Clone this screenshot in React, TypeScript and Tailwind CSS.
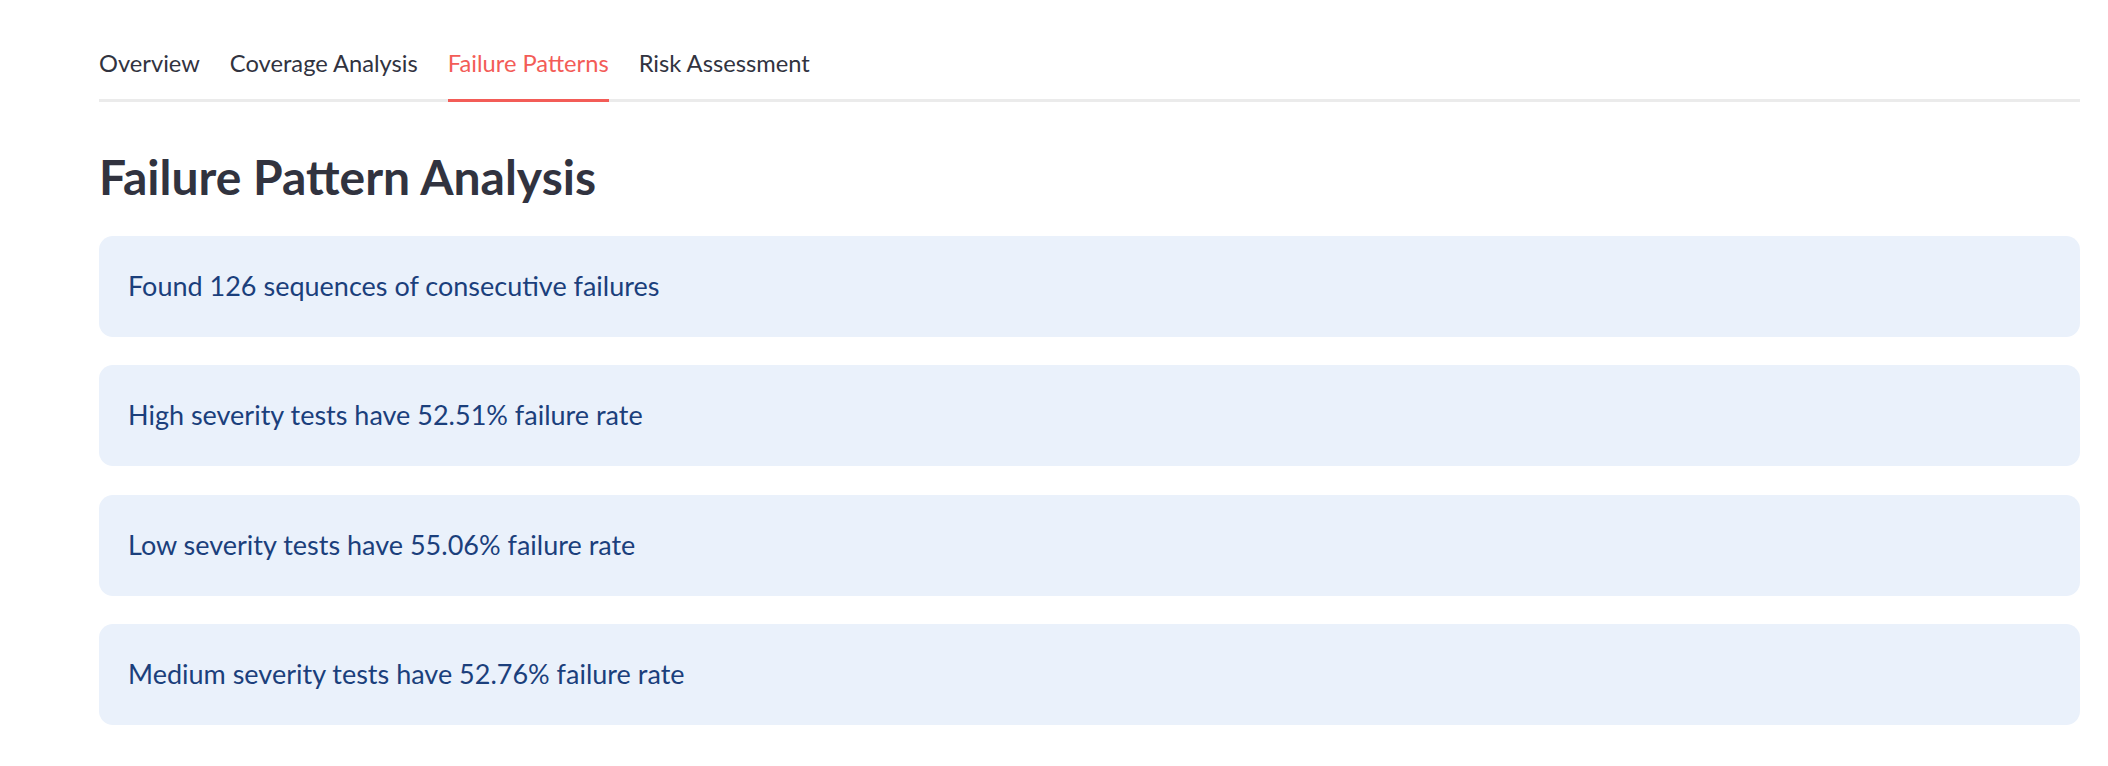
import React from "react";

const tabs = ["Overview", "Coverage Analysis", "Failure Patterns", "Risk Assessment"];
const active = "Failure Patterns";

const messages = [
  "Found 126 sequences of consecutive failures",
  "High severity tests have 52.51% failure rate",
  "Low severity tests have 55.06% failure rate",
  "Medium severity tests have 52.76% failure rate",
];

export default function App() {
  return (
    <div
      className="min-h-screen w-full bg-white pl-[99px] pr-[28px] pt-[30px]"
      style={{ fontFamily: "Lato, 'Noto Sans', sans-serif" }}
    >
      <div className="flex gap-[30px] shadow-[inset_0_-3px_0_#ebebeb]">
        {tabs.map((t) => (
          <div
            key={t}
            className={
              t === active
                ? "flex h-[72px] items-center border-b-[3px] border-[#f35c57] pb-[2px] text-[23.7px] text-[#f35c57]"
                : "flex h-[72px] items-center border-b-[3px] border-transparent pb-[2px] text-[23.7px] text-[#31333f]"
            }
          >
            {t}
          </div>
        ))}
      </div>

      <h2 className="mt-[46px] text-[48px] font-bold leading-[1.2] text-[#31333f]">
        Failure Pattern Analysis
      </h2>

      <div className="mt-[30px] flex flex-col gap-[28.5px]">
        {messages.map((m) => (
          <div
            key={m}
            className="flex h-[101px] items-center rounded-[14px] bg-[#eaf1fb] px-[29px] text-[27px] text-[#1b3f7c]"
          >
            {m}
          </div>
        ))}
      </div>
    </div>
  );
}
